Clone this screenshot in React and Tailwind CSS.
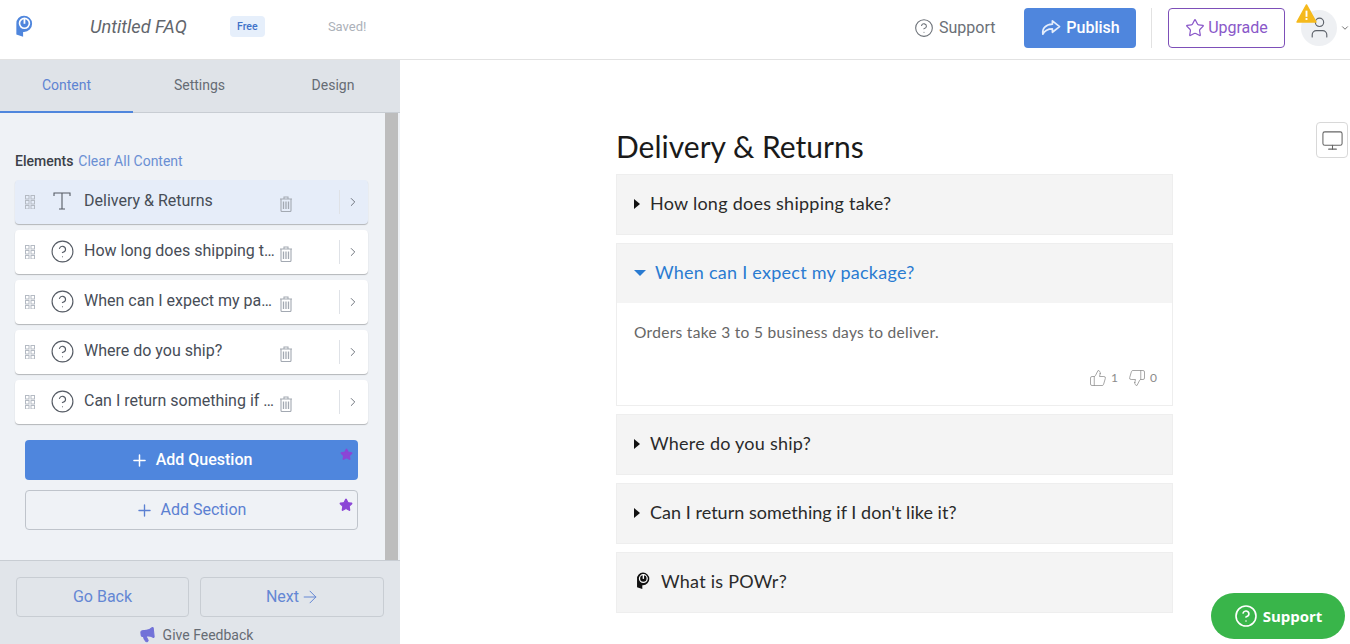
import React from "react";
import { CircleHelp, Star, User, ChevronDown, ChevronRight, Monitor, Plus, ArrowRight, Megaphone, ThumbsUp, ThumbsDown } from "lucide-react";

const Logo = ({ className, color }) => (
  <svg viewBox="0 0 20 26" className={className}>
    <path d="M10 1a9 9 0 0 1 0 18h-1v5.5L1.5 22V10A8.5 8.5 0 0 1 10 1z" fill={color} />
    <circle cx="10.5" cy="9.5" r="5.5" fill="none" stroke="#fff" strokeWidth="1.8" />
    <rect x="9.5" y="3.5" width="2" height="6.5" fill="#fff" />
  </svg>
);

const Grip = () => (
  <svg viewBox="0 0 10 14" className="w-[10px] h-[14px] shrink-0">
    {[0, 5, 10].map((y) => [0, 5.5].map((x) => (
      <rect key={x + "-" + y} x={x + 0.5} y={y + 0.5} width="3.5" height="3.5" fill="none" stroke="#b4bac3" strokeWidth="1" />
    )))}
  </svg>
);

const Trash = () => (
  <svg viewBox="0 0 14 16" className="w-[14px] h-[16px] shrink-0 mt-[3px]" fill="none" stroke="#a3a9b2" strokeWidth="1.1">
    <path d="M1 3h12M5 3V1h4v2M2 3v11.500a1 1 0 0 0 1 1h8a1 1 0 0 0 1-1V3" />
    <path d="M4.500 5.500v7.500M7 5.500v7.500M9.500 5.500v7.500" strokeWidth="1.300" />
  </svg>
);

const Row = ({ text, active, t }) => (
  <div className={"h-[44px] rounded flex items-center pl-[10px] shadow-[0_1px_1px_rgba(0,0,0,0.25)] " + (active ? "bg-[#e6edf9]" : "bg-white")}>
    <Grip />
    <div className="w-[49px] flex justify-center shrink-0 pl-[5px]">
      {t ? (
        <svg viewBox="0 0 20 20" className="w-[20px] h-[20px] text-[#555b64] -mt-[2px]" fill="none" stroke="currentColor" strokeWidth="1.1">
          <path d="M2 5V2h16v3M10 2v16M7 18h6" />
        </svg>
      ) : (
        <CircleHelp className="w-[25px] h-[25px] text-[#555b64] -mt-[2px]" strokeWidth={1.1} />
      )}
    </div>
    <div className="w-[195px] shrink-0 truncate text-[16px] text-[#474d57] pr-[3px] pb-[2px]">{text}</div>
    <Trash />
    <div className="ml-[46px] h-[24px] border-l border-[#dfe2e7]" />
    <ChevronRight className="w-[14px] h-[14px] text-[#666c75] ml-[6px]" strokeWidth={1.6} />
  </div>
);

const Q = ({ text, tight }) => (
  <div className={"h-[61px] bg-[#f4f4f4] border border-[#eeeeee] flex items-center pl-[17px] pb-[2px] text-[18px] text-[#2a2a2a] shrink-0 " + (tight ? "tracking-[0.03px]" : "tracking-[0.25px]")}>
    <span className="w-0 h-0 border-y-[5px] border-y-transparent border-l-[6px] border-l-[#111] mr-[10px]" />
    {text}
  </div>
);

export default function App() {
  return (
    <div className="w-[1350px] h-[644px] overflow-hidden bg-white flex flex-col relative font-['Roboto',sans-serif]">
      <header className="h-[60px] shrink-0 border-b border-[#e2e2e2] flex items-center relative">
        <Logo className="w-[18px] h-[25px] ml-[15px] -mt-[7px] shrink-0" color="#4f86dd" />
        <span className="ml-[57px] text-[18.200px] italic text-[#62666c] -mt-[6px]">Untitled FAQ</span>
        <span className="ml-[43px] w-[35px] h-[21px] rounded bg-[#e6effb] text-[#3f72c9] text-[10.5px] font-medium flex items-center justify-center -mt-[6px]">Free</span>
        <span className="ml-[63px] text-[13px] text-[#acb1b9] -mt-[5px]">Saved!</span>
        <div className="ml-auto flex items-center -mt-[4px] w-[435px] shrink-0">
          <CircleHelp className="w-[20px] h-[20px] text-[#6b7077] -ml-[1px] shrink-0" strokeWidth={1.3} />
          <span className="ml-[5px] text-[16px] text-[#6b7077] w-[85px]">Support</span>
          <div className="w-[112px] h-[40px] rounded bg-[#4f86dd] flex items-center justify-center text-white text-[16px] font-medium gap-[5px] shrink-0">
            <svg viewBox="0 0 22 18" className="w-[21px] h-[18px]" fill="none" stroke="#e4edfb" strokeWidth="1.8" strokeLinejoin="round">
              <path d="M13 1.5l7.5 6-7.5 6V10c-5 0-8 1.500-10 5.500C2 9 6 5.500 13 5z" />
            </svg>
            Publish
          </div>
          <div className="ml-[15px] h-[40px] border-l border-[#e2e2e2]" />
          <div className="ml-[16px] w-[117px] h-[40px] rounded border border-[#7d4fb8] flex items-center justify-center text-[#8a58c9] text-[16px] gap-[3px] shrink-0">
            <Star className="w-[20px] h-[20px]" strokeWidth={1.5} />
            Upgrade
          </div>
          <div className="ml-[16px] w-[36px] h-[36px] rounded-full bg-[#eef0f3] flex items-center justify-center shrink-0">
            <User className="w-[25px] h-[25px] text-[#5e636b]" strokeWidth={1.1} />
          </div>
          <ChevronDown className="w-[10px] h-[10px] text-[#555] ml-[3px] shrink-0" />
        </div>
        <svg viewBox="0 0 22 20" className="absolute left-[1296px] top-[4px] w-[21px] h-[19px]">
          <path d="M11 1L21 19H1z" fill="#f5b91c" stroke="#f5b91c" strokeLinejoin="round" strokeWidth="1.500" />
          <rect x="10" y="7" width="2" height="6.500" fill="#fff" />
          <rect x="10" y="14.800" width="2" height="2" fill="#fff" />
        </svg>
      </header>

      <div className="flex flex-1 min-h-0">
        <aside className="w-[400px] shrink-0 flex flex-col bg-[#eff2f6]">
          <nav className="h-[53px] shrink-0 bg-[#dfe3e8] border-b border-[#c8cdd3] flex text-[14px] text-[#666c74]">
            <div className="w-[133px] flex items-center justify-center text-[#5e84d2] border-b-2 border-[#4f86dd] h-[53px]">Content</div>
            <div className="w-[133px] flex items-center justify-center pb-[2px]">Settings</div>
            <div className="w-[134px] flex items-center justify-center pb-[2px]">Design</div>
          </nav>
          <div className="flex-1 min-h-0 flex">
            <div className="w-[385px] shrink-0 pt-[40px] pl-[15px] pr-[17px]">
              <div className="flex items-baseline gap-[5px] text-[14px] leading-[16px]">
                <span className="text-[#3b4048] font-medium">Elements</span>
                <span className="text-[#6a8fd3]">Clear All Content</span>
              </div>
              <div className="mt-[11px] flex flex-col gap-[6px]">
                <Row active t text="Delivery & Returns" />
                <Row text="How long does shipping take?" />
                <Row text="When can I expect my package?" />
                <Row text="Where do you ship?" />
                <Row text="Can I return something if I don't like it?" />
              </div>
              <div className="mt-[16px] mx-[10px] flex flex-col gap-[10px]">
                <div className="relative h-[40px] rounded bg-[#4f86dd] text-white text-[16px] font-medium flex items-center justify-center pr-[1px]">
                  <Plus className="w-[19px] h-[19px] mr-[7px]" strokeWidth={1.9} />
                  Add Question
                  <Star className="absolute right-[5px] top-[8px] w-[13px] h-[13px] text-[#8b46d6]" fill="currentColor" />
                </div>
                <div className="relative h-[40px] rounded border border-[#bfc4cb] text-[#5b80d2] text-[16px] flex items-center justify-center pr-[2px]">
                  <Plus className="w-[19px] h-[19px] mr-[7px]" strokeWidth={1.7} />
                  Add Section
                  <Star className="absolute right-[4px] top-[7px] w-[14px] h-[14px] text-[#8b46d6]" fill="currentColor" />
                </div>
              </div>
            </div>
            <div className="w-[13px] bg-[#bdbdbd]" />
          </div>
          <div className="h-[84px] shrink-0 bg-[#e1e5ea] border-t border-[#c8cdd3] px-[16px] pt-[16px]">
            <div className="flex gap-[11px]">
              <div className="w-[173px] h-[40px] rounded-sm border border-[#c8cdd3] flex items-center justify-center text-[16px] text-[#6487d4]">Go Back</div>
              <div className="w-[184px] h-[40px] rounded-sm border border-[#c8cdd3] flex items-center justify-center text-[16px] text-[#6487d4] pl-[2px]">
                Next
                <ArrowRight className="w-[20px] h-[20px] ml-[1px]" strokeWidth={1.2} />
              </div>
            </div>
            <div className="mt-[9px] flex items-center justify-center text-[14px] leading-[16px] text-[#666c74] pr-[8px]">
              <Megaphone className="w-[17px] h-[17px] text-[#7272d8] mr-[7px] -rotate-6" fill="currentColor" strokeWidth={1.5} />
              Give Feedback
            </div>
          </div>
        </aside>

        <main className="flex-1 relative font-['Lato',sans-serif]">
          <div className="ml-[216px] w-[557px] flex flex-col">
            <h1 className="mt-[66px] h-[48px] text-[30px] leading-[40px] text-[#1a1a1a]">Delivery &amp; Returns</h1>
            <div className="flex flex-col gap-[8px]">
              <Q text="How long does shipping take?" />
              <div className="border border-[#eeeeee] h-[163px] flex flex-col">
                <div className="h-[59px] bg-[#f4f4f4] flex items-center pl-[17px] pb-[2px] text-[18px] tracking-[0.25px] text-[#2a7bd1]">
                  <span className="w-0 h-0 border-x-[6px] border-x-transparent border-t-[6px] border-t-[#2a7bd1] mr-[9px]" />
                  When can I expect my package?
                </div>
                <p className="pl-[17px] pt-[19px] text-[15.500px] tracking-[0.3px] leading-[20px] text-[#666]">Orders take 3 to 5 business days to deliver.</p>
                <div className="mt-[27px] pr-[12px] flex justify-end items-center text-[12px] text-[#8b8b8b]">
                  <ThumbsUp className="w-[18px] h-[18px]" strokeWidth={1} />
                  <span className="ml-[4px] w-[11px]">1</span>
                  <ThumbsDown className="w-[18px] h-[18px] ml-[6px]" strokeWidth={1} />
                  <span className="ml-[4px] w-[10px]">0</span>
                </div>
              </div>
              <Q text="Where do you ship?" />
              <Q tight text="Can I return something if I don't like it?" />
              <div className="h-[61px] bg-[#f4f4f4] border border-[#eeeeee] flex items-center pl-[19px] pb-[2px] text-[18px] tracking-[0.25px] text-[#2a2a2a]">
                <Logo className="w-[14px] h-[20px] mr-[11px] -mt-[2px]" color="#111" />
                What is POWr?
              </div>
            </div>
          </div>

          <div className="absolute left-[916px] top-[62px] w-[32px] h-[36px] rounded-sm border border-[#d8d8d8] bg-white flex items-center justify-center">
            <Monitor className="w-[23px] h-[23px] text-[#666]" strokeWidth={1.1} />
          </div>
          <div className="absolute left-[811px] top-[533px] w-[134px] h-[46px] rounded-full bg-[#39b54a] flex items-center justify-center text-white text-[15px] font-bold font-['Open_Sans',sans-serif]">
            <CircleHelp className="w-[24px] h-[24px] mr-[5px]" strokeWidth={1.6} />
            Support
          </div>
        </main>
      </div>
    </div>
  );
}
